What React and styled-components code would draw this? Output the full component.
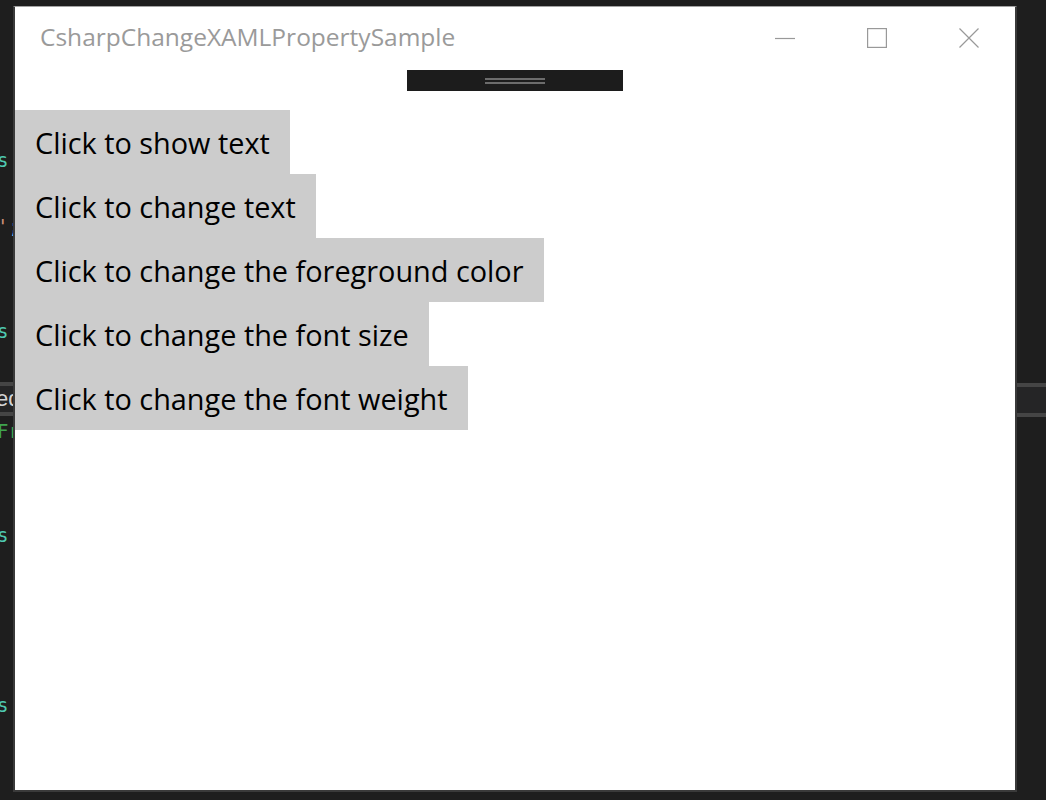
import styled, { createGlobalStyle } from "styled-components";

const GlobalStyle = createGlobalStyle`
  html, body {
    margin: 0;
    padding: 0;
    background: #1e1e1e;
    height: 800px;
    overflow: hidden;
  }
`;

const Desktop = styled.div`
  display: flex;
  height: 800px;
  background: #1e1e1e;
`;

const Gutter = styled.div`
  width: ${(props) => props.$width || "auto"};
  flex: ${(props) => (props.$grow ? 1 : "none")};
  display: flex;
  flex-direction: column;
  overflow: hidden;
  font-family: "DejaVu Sans Mono", "Liberation Mono", monospace;
  font-size: 19px;
  white-space: nowrap;
`;

const CodeLine = styled.div`
  height: 22px;
  line-height: 22px;
  margin-top: ${(props) => props.$top}px;
  margin-left: -3px;
  color: ${(props) => props.$color || "#d4d4d4"};
`;

const Band = styled.div`
  height: 4px;
  margin-top: ${(props) => props.$top || 0}px;
  background: #454545;
`;

const PanelRow = styled.div`
  height: 26px;
  line-height: 26px;
  background: #252526;
  color: #d4d4d4;
  font-family: "Liberation Sans", Arial, sans-serif;
  font-size: 22px;
  margin-left: -4px;
`;

const Window = styled.div`
  width: 1000px;
  height: 783px;
  margin-top: 6px;
  flex: none;
  background: #ffffff;
  border-top: 1px solid #a3a3a3;
  border-left: 2px solid #3a3a3a;
  border-right: 2px solid #3a3a3a;
  border-bottom: 2px solid #3a3a3a;
  display: flex;
  flex-direction: column;
  font-family: "Open Sans", "Noto Sans", sans-serif;
`;

const TitleBar = styled.div`
  height: 62px;
  display: flex;
  align-items: center;
`;

const Title = styled.div`
  flex: 1;
  padding-left: 25px;
  padding-bottom: 3px;
  font-size: 24.5px;
  color: #9a9a9a;
`;

const CaptionButton = styled.div`
  width: 92px;
  height: 62px;
  display: flex;
  align-items: center;
  justify-content: center;
`;

const Grip = styled.div`
  align-self: center;
  width: 216px;
  height: 21px;
  margin-top: 1px;
  background: #1c1c1c;
  display: flex;
  flex-direction: column;
  align-items: center;
  justify-content: center;
  gap: 2px;
`;

const GripLine = styled.div`
  width: 60px;
  height: 2px;
  background: #6c6c6c;
`;

const ButtonStack = styled.div`
  margin-top: 19px;
  display: flex;
  flex-direction: column;
  align-items: flex-start;
`;

const ActionButton = styled.div`
  height: 64px;
  padding: 0 20px;
  display: flex;
  align-items: center;
  background: #cccccc;
  color: #000000;
  font-size: 28.85px;
  box-sizing: border-box;
`;

const labels = [
  "Click to show text",
  "Click to change text",
  "Click to change the foreground color",
  "Click to change the font size",
  "Click to change the font weight",
];

function LeftEditor() {
  return (
    <Gutter $width="13px">
      <CodeLine $top={149} $color="#4ec9b0">s</CodeLine>
      <CodeLine $top={44}>
        <span style={{ color: "#ce9178" }}>'</span>
        <span style={{ color: "#9cdcfe" }}>;</span>
      </CodeLine>
      <CodeLine $top={83} $color="#4ec9b0">s</CodeLine>
      <Band $top={40} />
      <PanelRow>ed</PanelRow>
      <Band />
      <CodeLine $top={4} $color="#3fa34d">Fr</CodeLine>
      <CodeLine $top={82} $color="#4ec9b0">s</CodeLine>
      <CodeLine $top={148} $color="#4ec9b0">s</CodeLine>
    </Gutter>
  );
}

function RightEditor() {
  return (
    <Gutter $grow>
      <Band $top={383} />
      <PanelRow />
      <Band />
    </Gutter>
  );
}

export default function App() {
  return (
    <>
      <GlobalStyle />
      <Desktop>
        <LeftEditor />
        <Window>
          <TitleBar>
            <Title>CsharpChangeXAMLPropertySample</Title>
            <CaptionButton>
              <svg width="20" height="20" viewBox="0 0 20 20">
                <line x1="0" y1="10.5" x2="20" y2="10.5" stroke="#999" strokeWidth="1.2" />
              </svg>
            </CaptionButton>
            <CaptionButton>
              <svg width="20" height="20" viewBox="0 0 20 20">
                <rect x="0.6" y="0.6" width="18.8" height="18.8" fill="none" stroke="#999" strokeWidth="1.2" />
              </svg>
            </CaptionButton>
            <CaptionButton>
              <svg width="20" height="20" viewBox="0 0 20 20">
                <path d="M0.5 0.5 L19.5 19.5 M19.5 0.5 L0.5 19.5" stroke="#999" strokeWidth="1.2" />
              </svg>
            </CaptionButton>
          </TitleBar>
          <Grip>
            <GripLine />
            <GripLine />
          </Grip>
          <ButtonStack>
            {labels.map((label) => (
              <ActionButton key={label}>{label}</ActionButton>
            ))}
          </ButtonStack>
        </Window>
        <RightEditor />
      </Desktop>
    </>
  );
}
